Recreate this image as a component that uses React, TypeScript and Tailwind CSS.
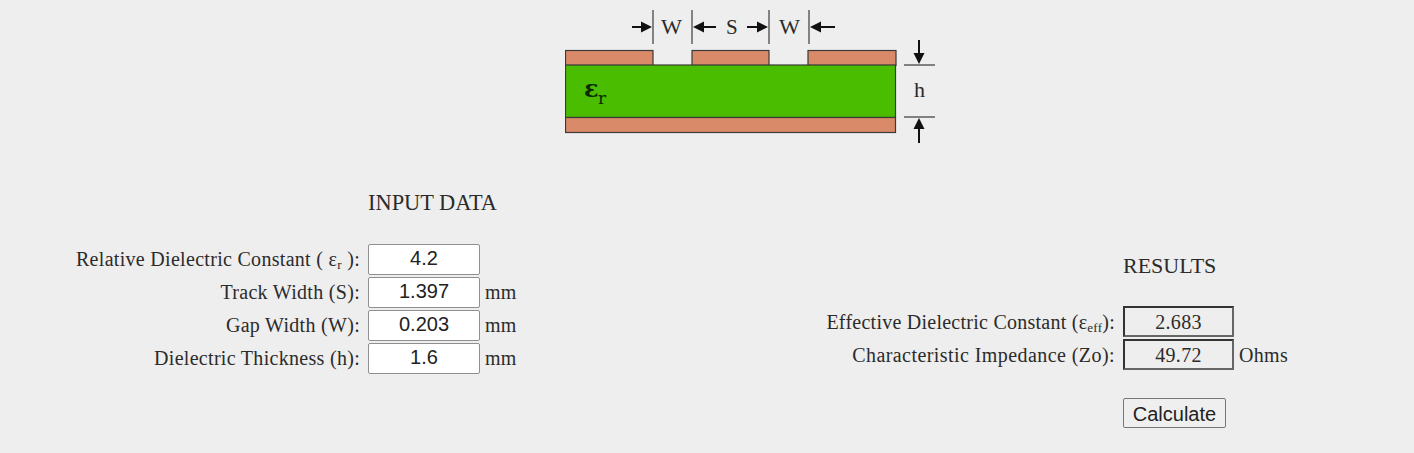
const serif = "font-['Liberation_Serif',serif] text-[#2b2b2b]";

function Arrow({ x1, y1, x2, y2 }: { x1: number; y1: number; x2: number; y2: number }) {
  const a = Math.atan2(y2 - y1, x2 - x1);
  const L = 11, W = 5.5;
  const bx = x2 - L * Math.cos(a), by = y2 - L * Math.sin(a);
  const nx = -Math.sin(a) * W, ny = Math.cos(a) * W;
  return (
    <g>
      <line x1={x1} y1={y1} x2={bx} y2={by} stroke="#111" strokeWidth="2" />
      <polygon points={`${x2},${y2} ${bx + nx},${by + ny} ${bx - nx},${by - ny}`} fill="#111" />
    </g>
  );
}

function Diagram() {
  const c = "#d98a68", e = "#3a3a3a";
  return (
    <svg width="380" height="140" viewBox="565 10 380 140" className="block">
      {[653, 692, 769, 809].map((x) => (
        <line key={x} x1={x} y1={10} x2={x} y2={44} stroke="#555" strokeWidth="1.4" />
      ))}
      <rect x="565.5" y="50.5" width="87.5" height="15" fill={c} stroke={e} strokeWidth="1.2" />
      <rect x="692" y="50.5" width="77" height="15" fill={c} stroke={e} strokeWidth="1.2" />
      <rect x="808" y="50.5" width="88" height="15" fill={c} stroke={e} strokeWidth="1.2" />
      <rect x="565.5" y="65" width="330" height="52.5" fill="#4abd00" stroke={e} strokeWidth="1.2" />
      <rect x="565.5" y="117.5" width="330" height="15" fill={c} stroke={e} strokeWidth="1.2" />
      <Arrow x1={632} y1={27} x2={652} y2={27} />
      <Arrow x1={716} y1={27} x2={693} y2={27} />
      <Arrow x1={747} y1={27} x2={768} y2={27} />
      <Arrow x1={835} y1={27} x2={810} y2={27} />
      <line x1="904" y1="65" x2="935" y2="65" stroke="#444" strokeWidth="1.3" />
      <line x1="904" y1="117" x2="935" y2="117" stroke="#444" strokeWidth="1.3" />
      <Arrow x1={919} y1={40} x2={919} y2={64} />
      <Arrow x1={919} y1={143} x2={919} y2={118} />
      <g fontFamily="'Liberation Serif', serif" fill="#2b2b2b" fontSize="21">
        <text x="661" y="34" textLength="21" lengthAdjust="spacingAndGlyphs">W</text>
        <text x="726" y="34" fontSize="21">S</text>
        <text x="779" y="34" textLength="21" lengthAdjust="spacingAndGlyphs">W</text>
        <text x="914" y="97" fontSize="22">h</text>
      </g>
      <g fontFamily="'DejaVu Serif', serif" fill="#0d2b00">
        <text x="584" y="97" fontSize="24" fontWeight="700">ε</text>
        <text x="598" y="104" fontSize="17" fontWeight="400">r</text>
      </g>
    </svg>
  );
}

const labelText = "text-[20px] tracking-[0.3px]";

function InputRow({ label, value, unit }: { label: React.ReactNode; value: string; unit?: string }) {
  return (
    <div className="flex items-center h-[33px]">
      <div className={`${serif} ${labelText} w-[360px] text-right whitespace-nowrap pb-[2px]`}>{label}</div>
      <input
        readOnly
        value={value}
        className="ml-2 w-[112px] h-[31px] bg-white border border-[#8f8f8f] rounded-[2px] text-center text-[20px] text-[#222] font-['Liberation_Sans',sans-serif] outline-none pb-[2px]"
      />
      {unit && <span className={`${serif} ${labelText} ml-[5px] pb-[2px]`}>{unit}</span>}
    </div>
  );
}

function ResultRow({ label, value, unit, spacing }: { label: React.ReactNode; value: string; unit?: string; spacing?: string }) {
  return (
    <div className="flex items-center h-[33px]">
      <div className={`${serif} ${labelText} ${spacing ?? ""} w-[315px] text-right whitespace-nowrap`}>{label}</div>
      <div
        className={`${serif} ${labelText} ml-2 w-[111px] h-[31px] flex items-center justify-center border-2 border-t-[#333] border-l-[#333] border-r-[#666] border-b-[#666]`}
      >
        {value}
      </div>
      {unit && <span className={`${serif} ${labelText} ml-[5px]`}>{unit}</span>}
    </div>
  );
}

export default function App() {
  return (
    <div className="w-[1414px] h-[453px] bg-[#eeeeee] overflow-hidden">
      <div className="flex pl-[565px] pt-[10px]">
        <Diagram />
      </div>
      <div className="flex">
        <div className="w-[800px] pt-[38px]">
          <h2 className={`${serif} pl-[368px] text-[22.4px] leading-[30px] font-normal`}>INPUT DATA</h2>
          <div className="mt-[25px]">
            <InputRow label={<>Relative Dielectric Constant ( ε<sub className="text-[13px]">r</sub> ):</>} value="4.2" />
            <InputRow label="Track Width (S):" value="1.397" unit="mm" />
            <InputRow label="Gap Width (W):" value="0.203" unit="mm" />
            <InputRow label="Dielectric Thickness (h):" value="1.6" unit="mm" />
          </div>
        </div>
        <div className="flex-1 pt-[101px]">
          <h2 className={`${serif} pl-[323px] text-[22px] leading-[30px] font-normal`}>RESULTS</h2>
          <div className="mt-[24px]">
            <ResultRow label={<>Effective Dielectric Constant (ε<sub className="text-[13px]">eff</sub>):</>} value="2.683" spacing="tracking-[0.25px]" />
            <ResultRow label="Characteristic Impedance (Zo):" value="49.72" unit="Ohms" spacing="tracking-[0.43px]" />
          </div>
          <div className="pl-[323px] mt-[27px]">
            <button className="w-[103px] h-[30px] pb-[3px] bg-[#efefef] border border-[#767676] rounded-[2px] text-[20px] text-[#222] font-['Liberation_Sans',sans-serif]">
              Calculate
            </button>
          </div>
        </div>
      </div>
    </div>
  );
}
